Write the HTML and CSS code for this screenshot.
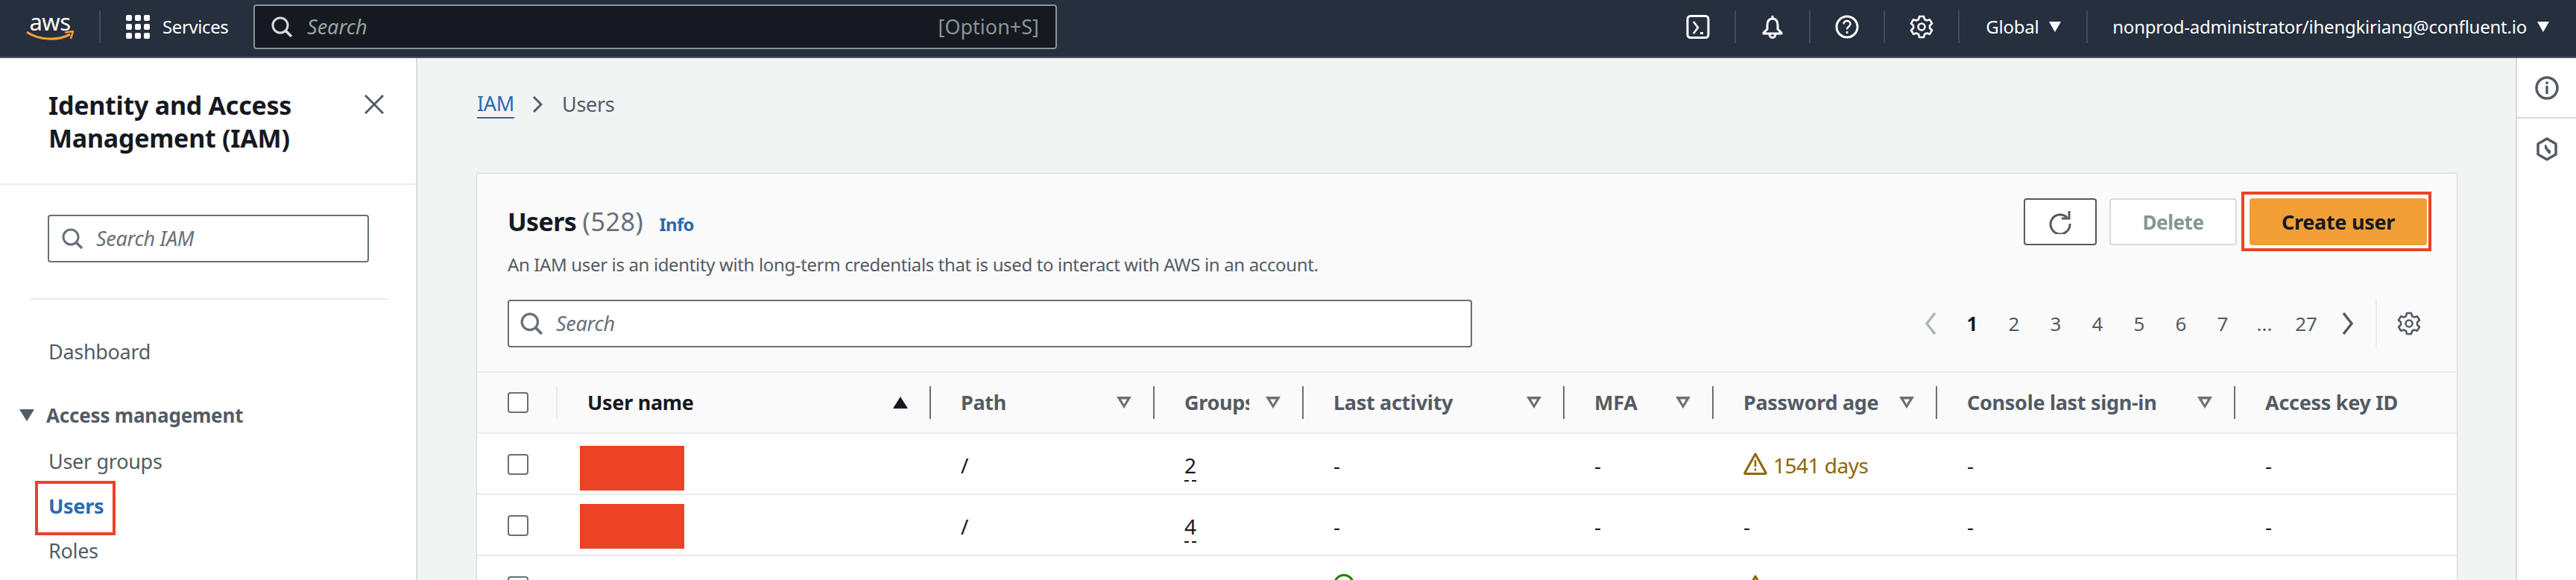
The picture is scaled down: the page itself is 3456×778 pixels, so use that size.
FILE: index.html
```html
<!DOCTYPE html>
<html lang="en">
<head>
<meta charset="utf-8">
<title>Users | IAM</title>
<link rel="stylesheet" href="styles.css">
</head>
<body>
<svg class="sprite" xmlns="http://www.w3.org/2000/svg">
  <symbol id="i-search" viewBox="0 0 28 28"><circle cx="12" cy="12" r="10" fill="none" stroke="currentColor" stroke-width="3"/><path d="M19 19l8 8" fill="none" stroke="currentColor" stroke-width="3.5"/></symbol>
  <symbol id="i-sort" viewBox="0 0 20 16"><path d="M0 0h20L10 16z M6 3.500l4 7 4-7z" fill="currentColor" fill-rule="evenodd"/></symbol>
  <symbol id="i-warn" viewBox="0 0 32 30"><path d="M16 2L2 27c-.5 1 0 1.500 1 1.500h26c1 0 1.500-.5 1-1.500z" fill="none" stroke="currentColor" stroke-width="3" stroke-linejoin="round"/><path d="M16 10v9M16 21.500v3" stroke="currentColor" stroke-width="2.500"/></symbol>
  <symbol id="i-caret" viewBox="0 0 16 16"><path d="M0 1h16L8 15z" fill="currentColor"/></symbol>
</svg>

<div class="page">
  <header class="topbar">
    <div class="logo">
      <span class="logo-text">aws</span>
      <svg class="logo-smile" viewBox="0 0 64 14"><path d="M1 2c16 11 42 12 58 3" fill="none" stroke="#f29f37" stroke-width="3.200"/><path d="M52 2.500l11-1.500-3 10" fill="none" stroke="#f29f37" stroke-width="2.600"/></svg>
    </div>
    <span class="bar-sep bar-sep-logo"></span>
    <div class="services">
      <span class="dots"><i></i><i></i><i></i><i></i><i></i><i></i><i></i><i></i><i></i></span>
      <span class="services-label">Services</span>
    </div>
    <div class="global-search">
      <svg class="gs-icon"><use href="#i-search"/></svg>
      <span class="gs-text">Search</span>
      <span class="gs-key">[Option+S]</span>
    </div>
    <div class="tools">
      <span class="tool"><svg viewBox="0 0 32 32"><rect x="2" y="1.500" width="28" height="29" rx="4" fill="none" stroke="#fff" stroke-width="3"/><path d="M10 9l6 8-6 8" fill="none" stroke="#fff" stroke-width="2.600"/><path d="M19 23h4v3h-4z" fill="#fff"/></svg></span>
      <span class="bar-sep"></span>
      <span class="tool"><svg viewBox="0 0 32 32"><path d="M16 1v4M16 5c-5 0-7 4-7 9v5l-5 5v1h24v-1l-5-5v-5c0-5-2-9-7-9zM12 26a4 4.500 0 0 0 8 0" fill="none" stroke="#fff" stroke-width="3" stroke-linejoin="round"/></svg></span>
      <span class="bar-sep"></span>
      <span class="tool"><svg viewBox="0 0 32 32"><circle cx="16" cy="16" r="14" fill="none" stroke="#fff" stroke-width="3"/><path d="M11.500 12.500c0-3 2-4.500 4.500-4.500s4.500 1.500 4.500 4c0 3.500-4.500 3.500-4.500 7.500" fill="none" stroke="#fff" stroke-width="2.400"/><path d="M14.700 22h2.600v3h-2.600z" fill="#fff"/></svg></span>
      <span class="bar-sep"></span>
      <span class="tool"><svg viewBox="0 0 32 32"><path d="M13 2h6l1 4 3 1.500 4-1.200 3 5.200-3 2.800v3.400l3 2.800-3 5.200-4-1.200-3 1.500-1 4h-6l-1-4-3-1.500-4 1.200-3-5.200 3-2.800v-3.400l-3-2.800 3-5.200 4 1.200 3-1.500z" fill="none" stroke="#fff" stroke-width="2.600" stroke-linejoin="round"/><circle cx="16" cy="16" r="4.500" fill="none" stroke="#fff" stroke-width="2.600"/></svg></span>
      <span class="bar-sep"></span>
      <span class="menu menu-region">Global<svg class="caret"><use href="#i-caret"/></svg></span>
      <span class="bar-sep"></span>
      <span class="menu menu-user">nonprod-administrator/ihengkiriang@confluent.io<svg class="caret"><use href="#i-caret"/></svg></span>
    </div>
  </header>

  <div class="body">
    <aside class="sidebar">
      <div class="side-head">
        <h2 class="side-title">Identity and Access Management (IAM)</h2>
        <svg class="side-close" viewBox="0 0 26 26"><path d="M1 1l24 24M25 1L1 25" fill="none" stroke="#545b64" stroke-width="3"/></svg>
      </div>
      <div class="side-search-wrap">
        <div class="side-search">
          <svg class="search-icon"><use href="#i-search"/></svg>
          <span class="placeholder">Search IAM</span>
        </div>
      </div>
      <nav class="side-nav">
        <a class="nav-link nav-dash">Dashboard</a>
        <div class="nav-section"><svg class="nav-tri" viewBox="0 0 20 16"><path d="M0 0h20L10 16z" fill="#545b64"/></svg>Access management</div>
        <ul class="nav-list">
          <li class="nav-link">User groups</li>
          <li class="nav-link nav-active"><span class="nav-mark">Users</span></li>
          <li class="nav-link">Roles</li>
        </ul>
      </nav>
    </aside>

    <main class="main">
      <div class="crumbs">
        <a class="crumb-link">IAM</a>
        <svg class="crumb-sep" viewBox="0 0 14 22"><path d="M2 1l10 10L2 21" fill="none" stroke="#545b64" stroke-width="3"/></svg>
        <span class="crumb-current">Users</span>
      </div>

      <section class="card">
        <div class="card-head">
          <div class="head-top">
            <div class="head-text">
              <h1 class="card-title">Users <span class="count">(528)</span> <a class="info">Info</a></h1>
              <p class="card-desc">An IAM user is an identity with long-term credentials that is used to interact with AWS in an account.</p>
            </div>
            <div class="actions">
              <button class="btn btn-refresh"><svg viewBox="0 0 32 32"><path d="M25 9.500A13 13 0 1 0 29 18" fill="none" stroke="#545b64" stroke-width="3"/><path d="M28 1v10H18" fill="none" stroke="#545b64" stroke-width="3"/></svg></button>
              <button class="btn btn-delete">Delete</button>
              <span class="create-mark"><button class="btn btn-create">Create user</button></span>
            </div>
          </div>
          <div class="head-tools">
            <div class="table-search">
              <svg class="search-icon"><use href="#i-search"/></svg>
              <span class="placeholder">Search</span>
            </div>
            <div class="pager">
              <span class="page-item"><svg class="chev" viewBox="0 0 16 30"><path d="M14 1L3 15l11 14" fill="none" stroke="#aab7b8" stroke-width="3.500"/></svg></span>
              <span class="page-item page-current">1</span>
              <span class="page-item">2</span>
              <span class="page-item">3</span>
              <span class="page-item">4</span>
              <span class="page-item">5</span>
              <span class="page-item">6</span>
              <span class="page-item">7</span>
              <span class="page-item">...</span>
              <span class="page-item">27</span>
              <span class="page-item"><svg class="chev" viewBox="0 0 16 30"><path d="M2 1l11 14L2 29" fill="none" stroke="#545b64" stroke-width="3.500"/></svg></span>
            </div>
            <div class="prefs">
              <svg viewBox="0 0 32 32"><path d="M13 2h6l1 4 3 1.500 4-1.200 3 5.200-3 2.800v3.400l3 2.800-3 5.200-4-1.200-3 1.500-1 4h-6l-1-4-3-1.500-4 1.200-3-5.200 3-2.800v-3.400l-3-2.800 3-5.200 4 1.200 3-1.500z" fill="none" stroke="#545b64" stroke-width="2.600" stroke-linejoin="round"/><circle cx="16" cy="16" r="4.500" fill="none" stroke="#545b64" stroke-width="2.600"/></svg>
            </div>
          </div>
        </div>

        <div class="table">
          <div class="thead row-grid">
            <div class="th th-check"><span class="check"></span></div>
            <div class="th"><div class="th-inner th-first"><span class="th-label th-sorted">User name</span><svg class="sort-solid" viewBox="0 0 20 16"><path d="M10 0l10 16H0z" fill="#16191f"/></svg></div></div>
            <div class="th"><div class="th-inner"><span class="th-label">Path</span><svg class="sort"><use href="#i-sort"/></svg></div></div>
            <div class="th"><div class="th-inner"><span class="th-label">Groups</span><svg class="sort"><use href="#i-sort"/></svg></div></div>
            <div class="th"><div class="th-inner"><span class="th-label">Last activity</span><svg class="sort"><use href="#i-sort"/></svg></div></div>
            <div class="th"><div class="th-inner"><span class="th-label">MFA</span><svg class="sort"><use href="#i-sort"/></svg></div></div>
            <div class="th"><div class="th-inner"><span class="th-label">Password age</span><svg class="sort"><use href="#i-sort"/></svg></div></div>
            <div class="th"><div class="th-inner"><span class="th-label">Console last sign-in</span><svg class="sort"><use href="#i-sort"/></svg></div></div>
            <div class="th"><div class="th-inner"><span class="th-label">Access key ID</span></div></div>
          </div>

          <div class="tr row-grid">
            <div class="td td-check"><span class="check"></span></div>
            <div class="td td-name"><span class="redact redact-first"></span></div>
            <div class="td">/</div>
            <div class="td"><span class="dashed">2</span></div>
            <div class="td">-</div>
            <div class="td">-</div>
            <div class="td warn"><svg class="warn-icon"><use href="#i-warn"/></svg>1541 days</div>
            <div class="td">-</div>
            <div class="td">-</div>
          </div>

          <div class="tr row-grid">
            <div class="td td-check"><span class="check"></span></div>
            <div class="td td-name"><span class="redact"></span></div>
            <div class="td">/</div>
            <div class="td"><span class="dashed">4</span></div>
            <div class="td">-</div>
            <div class="td">-</div>
            <div class="td">-</div>
            <div class="td">-</div>
            <div class="td">-</div>
          </div>

          <div class="tr row-grid">
            <div class="td td-check"><span class="check"></span></div>
            <div class="td td-link"><a class="user-link">admuser1</a></div>
            <div class="td">/</div>
            <div class="td"><span class="dashed">3</span></div>
            <div class="td ok"><svg class="ok-icon" viewBox="0 0 28 28"><circle cx="14" cy="14" r="12.500" fill="none" stroke="currentColor" stroke-width="3"/><path d="M8 14l4.500 4.500L20 10" fill="none" stroke="currentColor" stroke-width="3"/></svg>5 days</div>
            <div class="td">-</div>
            <div class="td warn"><svg class="warn-icon"><use href="#i-warn"/></svg>555 days</div>
            <div class="td">-</div>
            <div class="td">Active - AKIA4ZSTEUPVQ</div>
          </div>
        </div>
      </section>
    </main>

    <aside class="rail">
      <div class="rail-item"><svg viewBox="0 0 32 32"><circle cx="16" cy="16" r="14" fill="none" stroke="#545b64" stroke-width="3.500"/><path d="M14.300 13h3.400v11h-3.400zM14.300 7.500h3.400v3.400h-3.400z" fill="#545b64"/></svg></div>
      <div class="rail-item"><svg viewBox="0 0 32 32"><path d="M16 2l12 7v14l-12 7-12-7V9z" fill="none" stroke="#545b64" stroke-width="3.500" stroke-linejoin="round"/><path d="M13 10c4 0 3 5 5 6s4 2 3 5l-2 2-6-8z" fill="#545b64"/></svg></div>
    </aside>
  </div>
</div>
</body>
</html>
```

FILE: styles.css
```css
*, *::before, *::after { box-sizing: border-box; }
html, body { margin: 0; padding: 0; height: 100%; }
body { font-family: "Noto Sans", "Open Sans", sans-serif; font-size: 28px; line-height: 36px; color: #16191f; background: #f2f3f3; overflow: hidden; }
.sprite { display: none; }
.page { height: 778px; display: flex; flex-direction: column; overflow: hidden; }
h1, h2, p, ul { margin: 0; padding: 0; list-style: none; }
svg { display: block; flex: none; }

/* top bar */
.topbar { flex: none; height: 78px; background: #252f3e; border-bottom: 2px solid #4b5664; display: flex; align-items: center; color: #fff; padding-bottom: 4px; }
.logo { width: 64px; margin-left: 35px; display: flex; flex-direction: column; align-items: center; }
.logo-text { font-family: "Noto Sans", sans-serif; font-size: 31px; line-height: 24px; height: 24px; letter-spacing: -.5px; }
.logo-smile { width: 64px; height: 14px; }
.bar-sep { width: 2px; height: 44px; background: #414c5b; flex: none; }
.bar-sep-logo { margin-left: 34px; }
.services { display: flex; align-items: center; margin-left: 34px; width: 171px; }
.dots { display: grid; grid-template-columns: repeat(3, 8px); grid-auto-rows: 8px; gap: 4px; }
.dots i { background: #fff; border-radius: 2px; }
.services-label { margin-left: 17px; font-size: 24px; letter-spacing: -.4px; }
.global-search { width: 1078px; height: 60px; background: #16191f; border: 2px solid #879596; border-radius: 4px; display: flex; align-items: center; padding: 0 22px; }
.gs-icon { width: 28px; height: 28px; color: #d5dbdb; }
.gs-text { margin-left: 20px; font-style: italic; color: #95a5a6; font-size: 27px; }
.gs-key { margin-left: auto; color: #879596; font-size: 27px; }
.tools { margin-left: auto; display: flex; align-items: center; padding-right: 36px; }
.tool { width: 98px; display: flex; justify-content: center; }
.tool svg { width: 32px; height: 32px; }
.menu { display: flex; align-items: center; font-size: 24px; letter-spacing: -.23px; }
.menu-region { padding: 0 0 0 35px; width: 170px; }
.menu-user { padding-left: 33px; }
.caret { width: 16px; height: 16px; margin-left: 14px; color: #fff; }

/* layout */
.body { flex: 1; display: flex; min-height: 0; }
.sidebar { flex: none; width: 560px; background: #fff; border-right: 2px solid #d5dbdb; }
.main { flex: 1; min-width: 0; padding: 0 79px 0 80px; overflow: hidden; }
.rail { flex: none; width: 81px; background: #fff; border-left: 2px solid #d5dbdb; }
.rail-item { height: 81px; display: flex; align-items: center; justify-content: center; }
.rail-item:first-child { border-bottom: 2px solid #d5dbdb; }
.rail-item svg { width: 32px; height: 32px; }

/* sidebar */
.side-head { display: flex; justify-content: space-between; align-items: flex-start; padding: 41px 43px 39px 65px; border-bottom: 2px solid #eaeded; }
.side-title { width: 400px; font-size: 34px; line-height: 44px; font-weight: 700; letter-spacing: -.25px; }
.side-close { width: 26px; height: 26px; margin-top: 8px; }
.side-search-wrap { margin: 0 38px 0 40px; padding: 40px 24px 48px; border-bottom: 2px solid #eaeded; }
.side-search { width: 431px; height: 64px; background: #fff; border: 2px solid #687078; border-radius: 4px; display: flex; align-items: center; padding-left: 17px; }
.search-icon { width: 28px; height: 28px; color: #687078; }
.placeholder { margin-left: 18px; font-style: italic; color: #687078; font-size: 27px; letter-spacing: -.3px; }
.side-nav { padding-top: 52px; }
.nav-link { display: block; padding-left: 65px; color: #545b64; font-size: 27px; letter-spacing: -.3px; }
.nav-section { display: flex; align-items: center; margin-top: 49px; padding-left: 26px; font-weight: 700; color: #545b64; font-size: 26px; letter-spacing: -.2px; }
.nav-tri { width: 20px; height: 16px; margin-right: 16px; }
.nav-list { margin-top: 26px; display: flex; flex-direction: column; gap: 24px; }
.nav-active { color: #2a6ab3; font-weight: 700; }
.nav-mark { position: relative; display: inline-block; }
.nav-mark::after { content: ""; position: absolute; left: -18px; top: -16px; width: 108px; height: 73px; border: 4px solid #ec4225; }

/* breadcrumbs */
.crumbs { display: flex; align-items: center; height: 155px; padding-bottom: 32px; }
.crumb-link { color: #2a6ab3; border-bottom: 2px solid #2a6ab3; font-size: 27px; line-height: 36px; letter-spacing: -.3px; }
.crumb-sep { width: 14px; height: 22px; margin: 0 26px 0 24px; }
.crumb-current { color: #545b64; font-size: 27px; letter-spacing: -.3px; }

/* card */
.card { background: #fff; box-shadow: 0 0 2px rgba(0, 28, 36, .35); height: 700px; overflow: hidden; }
.card-head { height: 267px; background: #fafafa; border-bottom: 2px solid #eaeded; padding: 33px 40px 0 41px; }
.head-top { display: flex; justify-content: space-between; align-items: flex-start; }
.card-title { height: 62px; font-size: 34px; line-height: 62px; font-weight: 700; letter-spacing: -.6px; white-space: nowrap; }
.count { font-weight: 400; color: #687078; letter-spacing: .6px; }
.info { font-size: 24px; color: #2a6ab3; margin-left: 13px; letter-spacing: -.8px; }
.card-desc { margin-top: 9px; font-size: 24px; line-height: 36px; color: #545b64; letter-spacing: -.36px; white-space: nowrap; }
.actions { display: flex; gap: 17px; }
.btn { height: 63px; border-radius: 4px; font-family: inherit; font-weight: 700; font-size: 26px; letter-spacing: -.4px; padding: 0; display: flex; align-items: center; justify-content: center; cursor: pointer; }
.btn-refresh { width: 98px; background: #fff; border: 2px solid #545b64; }
.btn-refresh svg { width: 32px; height: 32px; }
.btn-delete { width: 171px; background: #fff; border: 2px solid #d5dbdb; color: #879596; }
.create-mark { position: relative; z-index: 0; display: block; }
.create-mark::before { content: ""; position: absolute; z-index: -1; left: -11px; top: -9px; width: 255px; height: 80px; background: #fff; border: 4px solid #ec4225; }
.btn-create { width: 238px; background: #f29f37; border: 0; color: #16191f; font-size: 27px; letter-spacing: -.3px; }
.head-tools { display: flex; align-items: center; margin-top: 29px; }
.table-search { width: 1294px; height: 64px; background: #fff; border: 2px solid #687078; border-radius: 4px; display: flex; align-items: center; padding-left: 15px; }
.table-search .search-icon { width: 30px; height: 30px; }
.table-search .placeholder { margin-left: 18px; }
.pager { margin-left: auto; display: flex; color: #545b64; font-size: 26px; }
.page-item { width: 56px; display: flex; align-items: center; justify-content: center; }
.page-current { color: #16191f; font-weight: 700; }
.chev { width: 16px; height: 30px; }
.prefs { margin-left: 9px; height: 64px; border-left: 2px solid #eaeded; padding: 0 8px 0 27px; display: flex; align-items: center; }
.prefs svg { width: 32px; height: 32px; }

/* table */
.row-grid { display: grid; grid-template-columns: 106px 501px 300px 200px 350px 200px 300px 400px 299px; }
.thead { height: 82px; background: #fafafa; border-bottom: 2px solid #eaeded; }
.th { display: flex; align-items: center; min-width: 0; }
.th-check { padding-left: 41px; }
.th-inner { width: 100%; height: 44px; display: flex; align-items: center; border-left: 2px solid #687078; padding: 0 29px 0 40px; gap: 22px; min-width: 0; }
.th-first { border-left-color: #eaeded; }
.th-label { flex: 1; min-width: 0; overflow: hidden; white-space: nowrap; font-weight: 700; font-size: 27px; letter-spacing: -.3px; color: #545b64; }
.th-sorted { color: #16191f; }
.sort { width: 20px; height: 16px; color: #687078; }
.sort-solid { width: 20px; height: 16px; }
.check { display: block; width: 28px; height: 28px; background: #fff; border: 2px solid #687078; border-radius: 4px; }
.tr { height: 82px; border-bottom: 2px solid #eaeded; background: #fff; }
.td { padding: 24px 0 0 42px; font-size: 28px; white-space: nowrap; min-width: 0; color: #16191f; display: flex; align-items: flex-start; }
.td-check { padding: 27px 0 0 41px; }
.td-name { padding: 0 0 0 32px; }
.td-link { padding-left: 42px; }
.user-link { color: #2a6ab3; }
.redact { display: block; width: 140px; height: 60px; margin-top: 12px; background: #ec4225; }
.redact-first { margin-top: 16px; }
.dashed { display: block; height: 40px; border-bottom: 2px dashed #16191f; }
.warn { color: #8d6605; letter-spacing: -.5px; }
.warn-icon { width: 32px; height: 30px; margin: 1px 8px 0 0; color: #8d6605; }
.ok { color: #1d8102; }
.ok-icon { width: 28px; height: 28px; margin: 0 12px 0 0; color: #1d8102; }
```
